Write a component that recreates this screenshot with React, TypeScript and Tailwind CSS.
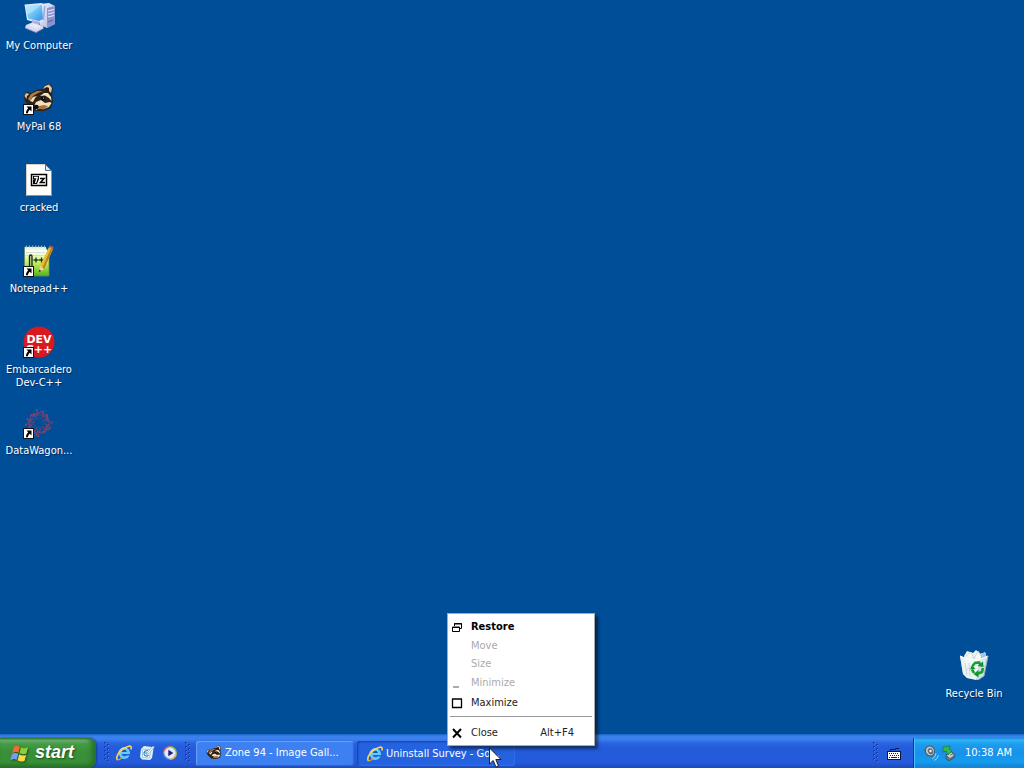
import type { ReactNode } from 'react';

function ShortcutArrow() {
  return (
    <g>
      <rect x="0.5" y="21.5" width="10" height="10" fill="#fff" stroke="#111" strokeWidth="1" />
      <path d="M3.500 23.500H8.500V28.500L6.800 26.800C5.500 28 5 29 5 30.300H3C2.800 28.500 3.700 26.800 5.200 25.200Z" fill="#000" />
    </g>
  );
}

function ComputerIcon() {
  return (
    <svg width="32" height="32" viewBox="0 0 32 32" aria-hidden="true">
      <defs>
        <linearGradient id="screen" x1="0" y1="0" x2="1" y2="1">
          <stop offset="0" stopColor="#a9e4fb" />
          <stop offset="0.5" stopColor="#6cc3f5" />
          <stop offset="1" stopColor="#2f8be6" />
        </linearGradient>
        <linearGradient id="tower" x1="0" y1="0" x2="1" y2="1">
          <stop offset="0" stopColor="#f4f5fd" />
          <stop offset="1" stopColor="#a5aedb" />
        </linearGradient>
      </defs>
      <path d="M17 2 26 1 32 4V22L24 26 17 23Z" fill="url(#tower)" />
      <path d="M24 6 32 4V22L24 26Z" fill="#8993cd" />
      <path d="M25 9 31 7.500M25 12 31 10.500M25 15 31 13.500" stroke="#e7eafb" strokeWidth="1.200" />
      <path d="M25 20l5-2" stroke="#59629f" />
      <path d="M1.500 2.500 18.500 1 22.500 3.500 21 19 16 21.500 4 18Z" fill="#dfe4f8" />
      <path d="M3 4 18.800 2.800 20 17 16 19 5.200 16.500Z" fill="url(#screen)" />
      <path d="M3 4 18.800 2.800 8 11 4.300 12Z" fill="#c6effc" opacity=".5" />
      <path d="M21 4 22.500 3.500 21 19 19.500 17Z" fill="#9aa5d9" />
      <path d="M9 18 17 20 16 25 9 24Z" fill="#aab2dc" />
      <path d="M3 23 9 20.500 20 24 20.500 26.500 13 30.500 2 26Z" fill="#d7dcf3" />
      <path d="M2 26 13 30.500 20.500 26.500" stroke="#7883bd" fill="none" />
      <path d="M7 23 15 26M10 22 17 25" stroke="#fff" strokeWidth=".8" />
    </svg>
  );
}

function RaccoonArt() {
  return (
    <g>
      <path d="M1 13 3 9 8 10 14 7 20 6 22 2 27 1 30 5 29 11 30 18 28 25 21 28 12 28 5 22 2 18Z" fill="#2f2018" />
      <path d="M20 6 22 3 26 1.500 29 5 28 10 26 8 26 5 24 4Z" fill="#e6c89b" />
      <path d="M22 7 23.500 5 25.500 5.500 25.500 9Z" fill="#241812" />
      <path d="M1.500 13 3 10 6.500 11 4 13 3.500 16Z" fill="#dfc08e" />
      <path d="M5 16 8 11 14 8 20 8 15 10 10 13 7 18Z" fill="#b07c46" />
      <path d="M7 18 10 14 14 13 12 15 10 19Z" fill="#f4e3bd" />
      <path d="M17 13 21 10 25 10 28 14 28.500 18 26 15 22 12.500Z" fill="#f6e4bd" />
      <path d="M11 23 13 19 18 17 22 20 27 19 28.500 20 26 24 21 26 17 25 13 27Z" fill="#f3e2bd" />
      <path d="M16 23 21 22 25 23 21 26.500 16 26Z" fill="#a97243" />
      <ellipse cx="13" cy="24" rx="2.800" ry="2.200" fill="#120c09" />
      <circle cx="20" cy="15.500" r="1.900" fill="#070605" />
      <circle cx="20.500" cy="15" r=".6" fill="#fff" />
    </g>
  );
}

function RaccoonIcon() {
  return (
    <svg width="32" height="32" viewBox="0 0 32 32" aria-hidden="true">
      <RaccoonArt />
      <ShortcutArrow />
    </svg>
  );
}

function ArchiveIcon() {
  return (
    <svg width="32" height="32" viewBox="0 0 32 32" aria-hidden="true">
      <path d="M3.500.500H22.500L28.500 6.500V31.500H3.500Z" fill="#fffefa" stroke="#d5d0c3" />
      <path d="M22.500.500V6.500H28.500Z" fill="#dfe7f5" stroke="#31486c" strokeWidth=".8" />
      <path d="M28.500 7V31.500H4" stroke="#9a927f" fill="none" />
      <rect x="8.500" y="10.500" width="15" height="11" fill="#fff" stroke="#000" strokeWidth="1.500" />
      <path d="M10 12H16V15L14 20H10V16H12L10 15.500Z" />
      <path d="M11 13.500H14.300L12.500 19" stroke="#fff" strokeWidth="1.300" fill="none" />
      <path d="M17 14.500H21L17.500 18.500H22" stroke="#000" strokeWidth="1.500" fill="none" />
    </svg>
  );
}

function NotepadIcon() {
  return (
    <svg width="32" height="32" viewBox="0 0 32 32" aria-hidden="true">
      <defs>
        <linearGradient id="note" x1="0" y1="0" x2="0" y2="1">
          <stop offset=".2" stopColor="#f8ffe5" />
          <stop offset=".55" stopColor="#c5ee58" />
          <stop offset="1" stopColor="#55b31d" />
        </linearGradient>
      </defs>
      <path d="M1.500 2H22L26 7V31H1.500Z" fill="url(#note)" stroke="#638a66" strokeWidth=".8" />
      <path d="M2 2H23V5H2Z" fill="#eaf1f5" />
      <path d="M3 1.500H23" stroke="#9db0bd" strokeWidth="2" strokeDasharray="1 2" />
      <path d="M3 7.500H22M3 10.500H22" stroke="#bed4dc" strokeWidth=".7" />
      <rect x="6.500" y="10" width="2.500" height="12" rx="1.200" fill="#c8d59a" stroke="#15291b" strokeWidth="1.300" />
      <path d="M10.500 15H15.500M13 12.500V17.500M16 15H21M18.500 12.500V17.500" stroke="#163b1e" strokeWidth="1.300" />
      <path d="M26 2 30 4 21 24 16 27 17 21Z" fill="#e9bd37" />
      <path d="M28 3 30 4 21 24 19 24Z" fill="#b88122" />
      <path d="M26 2 27 .500 30.500 2 30 4Z" fill="#d75b36" />
      <path d="M17 21 21 24 16 27Z" fill="#eed69b" />
      <path d="M16 27 16.500 24.500 18 26Z" />
      <ShortcutArrow />
    </svg>
  );
}

function DevIcon() {
  return (
    <svg width="32" height="32" viewBox="0 0 32 32" aria-hidden="true">
      <circle cx="16" cy="16" r="15.500" fill="#d81a20" />
      <g fill="#fff" className="font-['DejaVu_Sans',sans-serif] text-[11px] font-bold [text-shadow:none]" textAnchor="middle">
        <text x="16" y="17">DEV</text>
        <text x="16" y="27">C++</text>
      </g>
      <ShortcutArrow />
    </svg>
  );
}

const branches = Array.from({ length: 16 }, (_, i) => ({
  angle: i * 22.5 + (i % 3) * 6,
  reach: 2 + ((i * 5) % 4),
  lean: ((i * 7) % 5) - 2,
}));

function DataIcon() {
  return (
    <svg width="32" height="32" viewBox="0 0 32 32" aria-hidden="true">
      <g fill="none" opacity=".85">
        {branches.map(({ angle, reach, lean }) => (
          <g key={angle} transform={`rotate(${angle} 16 16)`}>
            <path d={`M16 ${10 + lean / 2} L${16 + lean} 7 L14 ${reach + 1} M${16 + lean} 7 L19 ${reach + 2}`} stroke="#a33a50" strokeWidth=".8" />
            <path d={`M13 9 L${17 - lean} 5 L20 7`} stroke="#5f4886" strokeWidth=".8" />
            <circle cx="14" cy={reach + 1} r=".9" fill="#b04453" />
            <circle cx={16 + lean} cy="7" r=".8" fill="#963f5d" />
            <circle cx="17" cy="11" r=".6" fill="#77437a" />
          </g>
        ))}
      </g>
      <ShortcutArrow />
    </svg>
  );
}

function RecycleIcon() {
  return (
    <svg width="32" height="32" viewBox="0 0 32 32" aria-hidden="true">
      <path d="M6 6 9 1 15 3 18 0 23 4 27 2 29 8 26 15 8 15Z" fill="#edf4f5" />
      <path d="M8 6 13 2 16 9 20 1 24 8" fill="#fffdf2" stroke="#b9cfd4" strokeWidth=".8" />
      <path d="M23 3 28 3 28 9 23 9Z" fill="#9bc9ec" />
      <path d="M2 6 9 9 21 10 30 6 26 26 20 30 9 28 5 24Z" fill="#d8e8ea" opacity=".95" />
      <path d="M2 6 9 9 21 10 18 30 9 28 5 24Z" fill="#f4f9f6" opacity=".8" />
      <path d="M2 6 9 9 21 10 30 6" stroke="#fff" strokeWidth="1.200" fill="none" />
      <path d="M7 13 9 25M11 13 12 26M8 20 14 16" stroke="#bdd6d2" strokeWidth=".8" />
      <path d="M30 6 26 26 20 30" stroke="#8ea7bd" fill="none" />
      <g fill="none" stroke="#1b9d36" strokeWidth="2.600">
        <path d="M14.500 16 17 13 21 12.500 23 15.500" />
        <path d="M25 18 24 22 19 24" />
        <path d="M16 23 14 19.500" />
      </g>
      <path d="M19.500 16 25.500 17 25 11.500ZM20.500 20 15.500 24 20.500 27.500ZM12 19.500 14 15 17.500 19Z" fill="#129331" />
    </svg>
  );
}

function ExplorerIcon() {
  return (
    <svg width="16" height="16" viewBox="0 0 16 16" aria-hidden="true" className="shrink-0">
      <path d="M13.600 10.500A5.700 5.700 0 1 1 14 7.200V9H5.600A3 3 0 0 0 10.600 10.500Z" fill="#62ccff" />
      <path d="M5.600 6.900H10.900A2.700 2.700 0 0 0 5.600 6.900Z" fill="#175ab9" />
      <path d="M3 8A5.300 5.300 0 0 1 11 3.500" fill="none" stroke="#c2f1ff" strokeWidth="1" />
      <path d="M1.500 15C-1 12 4 4 12 1.500 15 .500 16 2 14.700 4.500" fill="none" stroke="#ffd34c" strokeWidth="1.600" />
      <path d="M1.500 15C4 15 5 13.500 6 12.500" fill="none" stroke="#e5a72b" strokeWidth="1.200" />
    </svg>
  );
}

function ShowDesktopIcon() {
  return (
    <svg width="16" height="16" viewBox="0 0 16 16" aria-hidden="true">
      <path d="M2 4 5 1 13 2 14.500 4 13 13 11 15 3 14.500 1 12Z" fill="#d9f0f9" />
      <path d="M3.500 4.500 11.500 4.500 10.500 13 3.500 12.500Z" fill="#fff" stroke="#8ac0dc" strokeWidth=".8" />
      <path d="M9 5.500C6 5.500 4.800 7 5 9.200 5.500 11.500 8 11.500 9.500 10M6 8 8 8" fill="none" stroke="#2a7fb4" strokeWidth="1.200" />
      <path d="M8 8 14 1 15.500 2 10 8.500 7.500 9.500Z" fill="#f5fdff" stroke="#5d93b8" strokeWidth=".6" />
    </svg>
  );
}

function MediaIcon() {
  return (
    <svg width="16" height="16" viewBox="0 0 16 16" aria-hidden="true">
      <path d="M8 8V1A7 7 0 0 1 15 8Z" fill="#86bd4b" />
      <path d="M8 8H15A7 7 0 0 1 8 15Z" fill="#f0a735" />
      <path d="M8 8V15A7 7 0 0 1 1 8Z" fill="#527ee8" />
      <path d="M8 8H1A7 7 0 0 1 8 1Z" fill="#e46b48" />
      <circle cx="8" cy="8" r="5.300" fill="#f7f9ff" stroke="#c5d1ec" />
      <circle cx="8" cy="8" r="4" fill="#dfe8fd" />
      <path d="M6.300 4.800 11.300 8 6.300 11.200Z" fill="#1a1f78" />
    </svg>
  );
}

function WindowsFlag() {
  return (
    <svg width="19" height="19" viewBox="0 0 20 20" aria-hidden="true" className="shrink-0 drop-shadow-[1px_1px_1px_#164f18]">
      <path d="M4 3C7 1 9 2 10.500 3L9 9C7 8 5 8 2.200 9.500Z" fill="#ef6b38" />
      <path d="M11.500 3.300C14 5 16.500 4.500 19 3.300L17.300 10C14.500 11 12.500 11 10 9.500Z" fill="#8ccd3b" />
      <path d="M2 10.800C5 9 7 9.500 8.700 10.500L7 16.500C5 15.500 3 15.500.300 17Z" fill="#719ff4" />
      <path d="M9.700 11C12 12.500 14.500 12.500 17 11.500L15.300 17.800C12.500 19 10.300 18.500 8 17Z" fill="#ffd744" />
    </svg>
  );
}

function KeyboardIcon() {
  return (
    <svg width="14" height="14" viewBox="0 0 14 14" aria-hidden="true">
      <path d="M3.500 5V3.500H8.500V2.500H12" fill="none" stroke="#10184a" />
      <rect x=".5" y="5.500" width="13" height="8" fill="#fff" stroke="#0c1440" />
      <path d="M2 7.500H12M3 9.500H12" stroke="#17204a" strokeDasharray="1 1" />
      <path d="M2 11.500H3M4 11.500H10M11 11.500H12" stroke="#17204a" />
    </svg>
  );
}

function VolumeIcon() {
  return (
    <svg width="16" height="16" viewBox="0 0 16 16" aria-hidden="true">
      <path d="M1 5 4 1 10 2 12 8 9 12 4 10Z" fill="#52606b" />
      <ellipse cx="7" cy="6" rx="4.500" ry="5" fill="#c3c9cb" stroke="#4b5968" transform="rotate(-30 7 6)" />
      <ellipse cx="7.500" cy="6.300" rx="2.600" ry="3.200" fill="#616c76" transform="rotate(-30 7.500 6.300)" />
      <circle cx="7.500" cy="6" r="1.200" fill="#eef6f5" />
      <path d="M9 14Q13 12 13 8M11 15.500Q15 14 15.500 10" fill="none" stroke="#8fd4ff" />
    </svg>
  );
}

function SafeRemoveIcon() {
  return (
    <svg width="16" height="16" viewBox="0 0 16 16" aria-hidden="true">
      <path d="M4 10 9 6 13 10 12 13 7 16 4 14Z" fill="#62757c" stroke="#274e62" strokeWidth=".7" />
      <path d="M5 10.500 9 7.500 12 10 8 13Z" fill="#cbd4d0" />
      <path d="M8 10 11 9" stroke="#617a85" />
      <path d="M1 2 8 1 7 4 10 6 6 10 4 6 1 7Z" fill="#34b944" stroke="#197838" strokeWidth=".7" />
    </svg>
  );
}

type DesktopItemProps = { label: string; children: ReactNode };

function DesktopItem({ label, children }: DesktopItemProps) {
  return (
    <button
      type="button"
      className="flex w-[78px] flex-col items-center gap-[5px] text-center text-[11px] leading-[13px] text-white [text-shadow:1px_1px_1px_#002b5f]"
    >
      {children}
      <span className="w-full">{label}</span>
    </button>
  );
}

function Grip() {
  return (
    <svg width="6" height="22" viewBox="0 0 6 22" aria-hidden="true" className="shrink-0">
      {[0, 4, 8, 12, 16].map((y) => (
        <g key={y}>
          <path d={`M0 ${y}h2v2h-2zM3 ${y + 2}h2v2h-2z`} fill="#183eae" />
          <path d={`M1 ${y + 1}h1v1h-1zM4 ${y + 3}h1v1h-1z`} fill="#4c80ee" />
        </g>
      ))}
    </svg>
  );
}

function RestoreGlyph() {
  return (
    <svg width="12" height="12" viewBox="0 0 12 12" aria-hidden="true">
      <path d="M3.500 5V2.500H10.500V7.500H8.500M3 3H11" fill="none" stroke="#000" />
      <path d="M1.500 6H8.500V10.500H1.500ZM1 6.500H9" fill="#fff" stroke="#000" />
    </svg>
  );
}

function MinimizeGlyph() {
  return (
    <svg width="12" height="12" viewBox="0 0 12 12" aria-hidden="true">
      <path d="M2 9H8V11H2Z" fill="#aaa" />
    </svg>
  );
}

function MaximizeGlyph() {
  return (
    <svg width="12" height="12" viewBox="0 0 12 12" aria-hidden="true">
      <path d="M1.500 2V10.500H10.500V2M1 2H11" fill="none" stroke="#000" strokeWidth="1.300" />
    </svg>
  );
}

function CloseGlyph() {
  return (
    <svg width="12" height="12" viewBox="0 0 12 12" aria-hidden="true">
      <path d="M2 2 10 10.500M10 2 2 10.500" stroke="#000" strokeWidth="2" />
    </svg>
  );
}

type MenuRowProps = { label: string; glyph?: ReactNode; shortcut?: string; disabled?: boolean; className: string };

function MenuRow({ label, glyph, shortcut, disabled, className }: MenuRowProps) {
  return (
    <button type="button" role="menuitem" disabled={disabled} className={`flex w-full items-center text-left disabled:text-[#aaa] ${className}`}>
      <span className="flex w-[21px] shrink-0 pl-[1px]">{glyph}</span>
      <span className="flex-1">{label}</span>
      {shortcut && <span className="pr-[18px]">{shortcut}</span>}
    </button>
  );
}

function WindowMenu() {
  return (
    <div
      role="menu"
      aria-label="Window"
      className="absolute bottom-[22px] left-[447px] w-[148px] border border-[#aaa] bg-white px-[2px] pt-[3px] pb-[1px] text-[11px] text-[#222] shadow-[3px_3px_3px_rgba(0,0,0,0.5)]"
    >
      <MenuRow label="Restore" glyph={<RestoreGlyph />} className="h-5 font-bold text-black" />
      <MenuRow label="Move" disabled className="h-[18px]" />
      <MenuRow label="Size" disabled className="h-[18px]" />
      <MenuRow label="Minimize" glyph={<MinimizeGlyph />} disabled className="h-5" />
      <MenuRow label="Maximize" glyph={<MaximizeGlyph />} className="h-5" />
      <div role="separator" className="pt-[3px] pb-[5px]">
        <div className="h-px bg-[#999]" />
      </div>
      <MenuRow label="Close" glyph={<CloseGlyph />} shortcut="Alt+F4" className="h-[22px]" />
    </div>
  );
}

function Taskbar() {
  return (
    <footer className="flex h-[34px] shrink-0 items-end bg-[linear-gradient(to_bottom,#1c5fc0_0px,#3a80ea_2px,#3c81ef_5px,#2a65df_9px,#245bdb_14px,#245bdb_28px,#1d4ac0_34px)] text-[11px] text-white">
      <button
        type="button"
        className="flex h-[30px] w-24 shrink-0 items-center gap-[6px] rounded-r-[8px] bg-[linear-gradient(to_bottom,#327a35_0px,#75b577_2px,#439c43_6px,#388f38_14px,#398f37_24px,#28702a_30px)] pl-[10px] font-['Liberation_Sans',sans-serif] text-[18px] leading-none font-bold text-white italic shadow-[inset_-4px_0_5px_#266f2c,1px_0_2px_#173d91] [text-shadow:1px_1px_2px_#174c19]"
      >
        <WindowsFlag />
        <span className="pb-[2px]">start</span>
      </button>
      <div className="flex h-[30px] items-center pl-2">
        <Grip />
        <nav aria-label="Quick Launch" className="flex items-center gap-[7px] pl-[6px]">
          <button type="button" aria-label="Internet Explorer"><ExplorerIcon /></button>
          <button type="button" aria-label="Show Desktop"><ShowDesktopIcon /></button>
          <button type="button" aria-label="Media Player"><MediaIcon /></button>
        </nav>
        <div className="pl-[7px]"><Grip /></div>
      </div>
      <div className="flex h-[30px] min-w-0 flex-1 items-center gap-[3px] pl-[5px] whitespace-nowrap">
        <button
          type="button"
          className="flex h-[25px] w-[158px] items-center gap-[3px] rounded-[3px] bg-[#3c80f2] pl-[10px] shadow-[inset_1px_1px_1px_#6ba1fb,inset_-1px_-1px_1px_#2d64d8]"
        >
          <svg width="16" height="16" viewBox="0 0 32 32" aria-hidden="true" className="shrink-0"><RaccoonArt /></svg>
          <span>Zone 94 - Image Gall...</span>
        </button>
        <button
          type="button"
          className="flex h-[25px] w-[158px] items-center gap-[3px] rounded-[3px] bg-[#2462e0] pt-[2px] pl-[10px] shadow-[inset_1px_1px_2px_#1740a0,inset_-1px_-1px_1px_#3470e6]"
        >
          <ExplorerIcon />
          <span>Uninstall Survey - Go...</span>
        </button>
      </div>
      <div className="flex h-[30px] items-center gap-2 pr-3">
        <Grip />
        <button type="button" aria-label="Language bar"><KeyboardIcon /></button>
      </div>
      <div className="flex h-[30px] shrink-0 items-center border-l border-[#11349c] bg-[linear-gradient(to_bottom,#1785d8_0px,#32b4f7_2px,#1d9cf0_6px,#1791eb_15px,#159ced_24px,#137bd0_30px)] pr-3 pl-[9px] shadow-[inset_1px_0_1px_#4bc1ff]">
        <div className="flex gap-[3px]">
          <button type="button" aria-label="Volume"><VolumeIcon /></button>
          <button type="button" aria-label="Safely Remove Hardware"><SafeRemoveIcon /></button>
        </div>
        <time className="pl-[7px] whitespace-nowrap">10:38 AM</time>
      </div>
    </footer>
  );
}

export default function App() {
  return (
    <div className="relative flex h-screen flex-col overflow-hidden bg-[#004e98] font-['DejaVu_Sans_Condensed','DejaVu_Sans',sans-serif] select-none">
      <main className="flex flex-1 items-start justify-between pt-[2px]">
        <div className="grid auto-rows-[81px] items-start">
          <DesktopItem label="My Computer"><ComputerIcon /></DesktopItem>
          <DesktopItem label="MyPal 68"><RaccoonIcon /></DesktopItem>
          <DesktopItem label="cracked"><ArchiveIcon /></DesktopItem>
          <DesktopItem label="Notepad++"><NotepadIcon /></DesktopItem>
          <DesktopItem label="Embarcadero Dev-C++"><DevIcon /></DesktopItem>
          <DesktopItem label="DataWagon..."><DataIcon /></DesktopItem>
        </div>
        <div className="self-end pr-[11px] pb-[34px]">
          <DesktopItem label="Recycle Bin"><RecycleIcon /></DesktopItem>
        </div>
      </main>
      <Taskbar />
      <WindowMenu />
      <svg width="13" height="21" viewBox="0 0 13 21" aria-hidden="true" className="pointer-events-none absolute bottom-0 left-[489px]">
        <path d="M.500 1V17L4.200 13.500 7 20 9.500 19 6.800 12.500H12Z" fill="#fff" stroke="#111" strokeWidth=".9" />
      </svg>
    </div>
  );
}
